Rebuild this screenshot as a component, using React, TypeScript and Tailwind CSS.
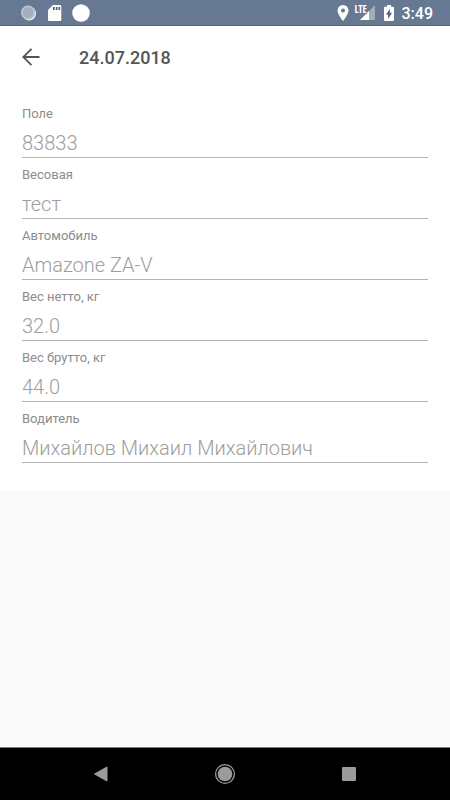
const fields = [
  { id: "field", label: "Поле", value: "83833" },
  { id: "scales", label: "Весовая", value: "тест" },
  { id: "vehicle", label: "Автомобиль", value: "Amazone ZA-V" },
  { id: "net", label: "Вес нетто, кг", value: "32.0" },
  { id: "gross", label: "Вес брутто, кг", value: "44.0" },
  { id: "driver", label: "Водитель", value: "Михайлов Михаил Михайлович" },
];

function StatusBar() {
  return (
    <div className="flex h-[26px] shrink-0 items-center justify-between border-b border-[#576883] bg-[#667892] pr-[17px] pl-5 text-white">
      <div className="flex items-center gap-2.5">
        <svg width="17" height="18" viewBox="0 0 17 18" aria-hidden="true">
          <circle cx="9" cy="9.500" r="7" fill="#f2f4f7" />
          <circle cx="8" cy="8.500" r="7" fill="#a3aebd" />
          <circle cx="8" cy="8.500" r="6" fill="none" stroke="#c6cdd7" strokeWidth="2" strokeDasharray="1 1" />
        </svg>
        <svg width="15" height="18" viewBox="0 0 15 18" aria-hidden="true">
          <path d="M6 1h7a1.300 1.300 0 0 1 1.300 1.300v13.400a1.300 1.300 0 0 1-1.300 1.300H2.300A1.300 1.300 0 0 1 1 15.700V6z" fill="#fff" />
          <path d="M6 3h1.600v3H6zM8.800 3h1.600v3H8.800zM11.500 3h1.600v3h-1.600z" fill="#445b7c" />
        </svg>
        <svg width="18" height="18" viewBox="0 0 18 18" aria-hidden="true">
          <circle cx="9" cy="9" r="8.800" fill="#fff" />
        </svg>
      </div>
      <div className="flex items-center">
        <svg width="12" height="16" viewBox="0 0 12 16" aria-hidden="true">
          <path fillRule="evenodd" d="M6 0a5.500 5.500 0 0 0-5.500 5.500C.5 9.600 6 16 6 16s5.500-6.400 5.500-10.500A5.500 5.500 0 0 0 6 0zm0 3.500a2 2 0 1 1 0 4 2 2 0 0 1 0-4z" fill="#fff" />
        </svg>
        <div className="relative ml-1.5 h-[18px] w-5">
          <svg className="absolute right-0 bottom-0.5" width="16" height="15" viewBox="0 0 16 15" aria-hidden="true">
            <path d="M16 0v15H1z" fill="#a3aebd" />
            <path d="M10 6v9H1z" fill="#fff" />
          </svg>
          <span className="absolute top-0 left-0 bg-[#667892] font-['Open_Sans_Condensed','Roboto_Condensed',Roboto,sans-serif] text-[10px] leading-[10px] font-medium">LTE</span>
        </div>
        <svg className="ml-2" width="12" height="16" viewBox="0 0 12 16" aria-hidden="true">
          <path d="M4 0h4v1.700h2a1 1 0 0 1 1 1V15a1 1 0 0 1-1 1H2a1 1 0 0 1-1-1V2.700a1 1 0 0 1 1-1h2z" fill="#fff" />
          <path d="M6.800 3.700v4h2.200L5.200 14v-4.200H3z" fill="#50627e" />
        </svg>
        <time className="ml-[7px] pt-0.5 text-base leading-5 font-medium">3:49</time>
      </div>
    </div>
  );
}

function NavigationBar() {
  return (
    <nav className="grid h-[53px] shrink-0 grid-cols-3 items-center border-t border-[#777] bg-black px-[39px] text-[#9b9b9b]">
      <button type="button" aria-label="Назад" className="flex justify-center">
        <svg width="16" height="16" viewBox="0 0 16 16" aria-hidden="true">
          <path d="M14 1v14L1.500 8z" fill="currentColor" stroke="currentColor" strokeLinejoin="round" />
        </svg>
      </button>
      <button type="button" aria-label="Домой" className="flex justify-center">
        <svg width="22" height="22" viewBox="0 0 22 22" aria-hidden="true">
          <circle cx="11" cy="11" r="9.400" fill="none" stroke="currentColor" strokeWidth="1.300" />
          <circle cx="11" cy="11" r="7.300" fill="currentColor" />
        </svg>
      </button>
      <button type="button" aria-label="Обзор" className="flex justify-center">
        <span className="size-3.5 rounded-[1px] bg-current" />
      </button>
    </nav>
  );
}

export default function App() {
  return (
    <div className="flex min-h-screen flex-col bg-[#fafafa] font-[Roboto,'Noto_Sans',sans-serif]">
      <StatusBar />
      <main className="flex-1">
        <header className="flex h-[62px] items-center bg-white px-5 text-[#545454]">
          <button type="button" aria-label="Вернуться" className="flex size-6 items-center justify-center">
            <svg width="24" height="24" viewBox="0 0 24 24" fill="none" stroke="currentColor" strokeWidth="1.800" aria-hidden="true">
              <path d="M19.500 12H3.500M11.500 3.800L3.300 12l8.200 8.200" />
            </svg>
          </button>
          <h1 className="ml-[35px] pt-0.5 text-lg leading-6 font-medium">24.07.2018</h1>
        </header>
        <form className="bg-white px-[22px] pt-2.5 pb-[27px]">
          {fields.map((field) => (
            <div key={field.id} className="flex h-[61px] flex-col pt-2">
              <label htmlFor={field.id} className="text-[13px] leading-4 text-[#8c8c8c]">
                {field.label}
              </label>
              <input
                id={field.id}
                type="text"
                readOnly
                defaultValue={field.value}
                className="h-9 w-full border-b border-[#b4b4b4] pt-1.5 text-xl font-light text-[#9e9e9e] outline-none"
              />
            </div>
          ))}
        </form>
      </main>
      <NavigationBar />
    </div>
  );
}
